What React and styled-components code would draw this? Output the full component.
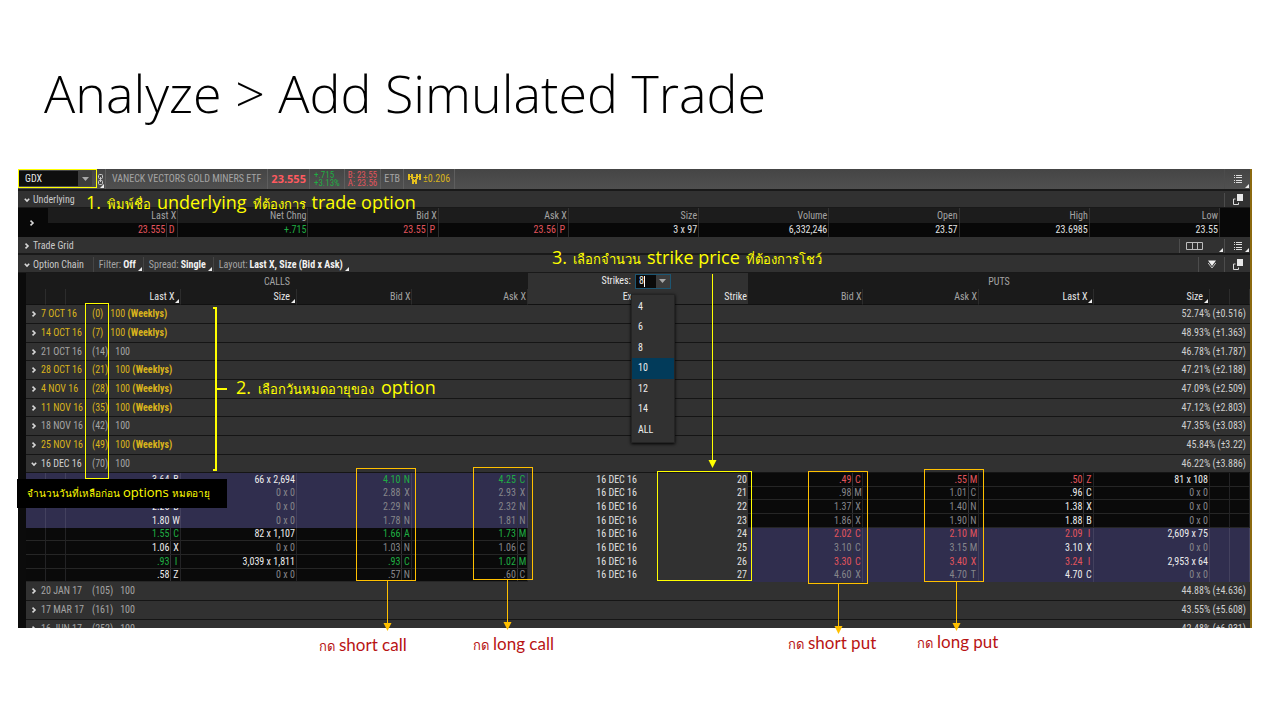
import React from "react";
import styled, { createGlobalStyle, css } from "styled-components";

const c = {
  green: "#1fae43",
  red: "#e2545c",
  gold: "#d9b31c",
  dim: "#86868a",
  text: "#e0e0e0",
  soft: "#a4a4a4",
  yellow: "#ffff00",
  orange: "#ffc000",
  crimson: "#b81414",
};

const GlobalStyle = createGlobalStyle`
  * { box-sizing: border-box; }
  body { margin: 0; background: #fff; }
  button, input { font: inherit; color: inherit; margin: 0; padding: 0; border: 0; background: none; }
  table { width: 100%; table-layout: fixed; border-collapse: separate; border-spacing: 0; }
  th, td { padding: 0; font-weight: 400; }
  ul { list-style: none; margin: 0; padding: 0; }
`;

const Slide = styled.main`
  min-height: 100vh;
  padding: 48px 28px 40px 18px;
`;

const Title = styled.h1`
  margin: 0 0 31px 26px;
  font: 300 52px/90px "Open Sans", "Liberation Sans", sans-serif;
  color: #000;
`;

const Stage = styled.div`
  position: relative;
`;

const Platform = styled.section`
  background: #0b0b0b;
  border-right: 2px solid #8c6a10;
  color: ${c.text};
  font: 10px/14px "Roboto Condensed", Roboto, "Open Sans", sans-serif;
`;

const Bar = styled.header`
  display: flex;
  align-items: stretch;
  height: ${(p) => p.$h}px;
  padding-top: ${(p) => (p.$bg ? 0 : 2)}px;
  background: ${(p) => p.$bg || "#313131"};
  border-bottom: ${(p) => (p.$edge ? 2 : 1)}px solid #191919;
`;

const Cell = styled.div`
  display: flex;
  align-items: center;
  gap: 2px;
  position: relative;
  padding: 0 ${(p) => p.$pad || 0}px;
  width: ${(p) => (p.$w ? `${p.$w}px` : "auto")};
  border-right: ${(p) => (p.$line ? "1px solid #5e5e5e" : "0")};
  color: ${(p) => p.$c || c.soft};
  white-space: nowrap;
`;

const Spacer = styled.div`
  flex: 1;
`;

const Corner = styled.i`
  position: absolute;
  right: 1px;
  bottom: 1px;
  border: solid transparent;
  border-width: 0 0 4px 4px;
  border-bottom-color: #eee;
`;

const SymbolBox = styled.div`
  display: flex;
  align-items: center;
  width: 79px;
  padding: 0 5px 1px 1px;
`;

const SymbolInput = styled.input`
  flex: 1;
  min-width: 0;
  height: 15px;
  padding-left: 6px;
  background: #0f0f0f;
  color: #e6e6e6;
`;

const DropButton = styled.button`
  display: flex;
  align-items: center;
  justify-content: center;
  width: 14px;
  height: ${(p) => p.$h || 15}px;
  background: #3c3c3c;
`;

const Price = styled.strong`
  font: 700 11px/16px "Open Sans", sans-serif;
  color: #ff5a5f;
`;

const Stack = styled.div`
  font: 9px/8px "Roboto Condensed", Roboto, sans-serif;
  color: ${(p) => p.$c};
`;

const IconButton = styled.button`
  display: flex;
  align-items: center;
  justify-content: center;
  position: relative;
  width: ${(p) => p.$w || 26}px;
  border-left: 1px solid #4c4c4c;
`;

const SectionButton = styled.button`
  display: flex;
  align-items: center;
  gap: 3px;
  padding: 0 9px 0 6px;
  color: #c9c9c9;
`;

const Setting = styled.button`
  display: flex;
  align-items: center;
  gap: 2px;
  position: relative;
  padding: 0 7px 0 5px;
  border-left: 1px solid #454545;
  color: ${c.soft};
  white-space: nowrap;
  b { color: #f2f2f2; }
`;

const QuoteHead = styled.th`
  height: 15px;
  padding: 1px 1px 0 0;
  text-align: right;
  line-height: 14px;
  color: ${c.soft};
  background: #1c1c1c;
  border-right: 1px solid #333;
`;

const QuoteCell = styled.td`
  height: 14px;
  line-height: 14px;
  padding-right: 1px;
  text-align: right;
  color: ${(p) => p.$c || c.text};
  background: #080808;
  border-right: 1px solid #2b2b2b;
`;

const QuoteEdge = styled.td`
  background: #080808;
`;

const Pair = styled.div`
  display: flex;
  justify-content: flex-end;
  gap: 1px;
`;

const Letter = styled.span`
  width: 10px;
  text-align: center;
  border-left: 1px solid #333338;
`;

const ChainWrap = styled.div`
  height: 355px;
  overflow: hidden;
  padding-left: 8px;
`;

const GroupHead = styled.th`
  height: 16px;
  padding-top: 1px;
  color: ${c.soft};
  background: #1a1a1a;
`;

const MiddleHead = styled.th`
  height: 16px;
  background: #313131;
`;

const ColumnHead = styled.th`
  position: relative;
  height: 16px;
  padding: 1px ${(p) => (p.$sort ? 6 : 1)}px 0 0;
  text-align: right;
  color: ${(p) => (p.$strong ? "#e8e8e8" : c.soft)};
  background: ${(p) => (p.$mid ? "#313131" : "#1a1a1a")};
  border-right: ${(p) => (p.$mid ? "0" : "1px solid #2c2c2c")};
  border-bottom: 1px solid #111;
`;

const StrikeControl = styled.div`
  display: flex;
  align-items: center;
  justify-content: flex-end;
  gap: 4px;
  margin-right: 77px;
  color: #ececec;
`;

const Combo = styled.div`
  position: relative;
  display: flex;
  width: 36px;
  height: 15px;
  border: 1px solid #1d5672;
  background: #0a0a0a;
  input { width: 20px; padding-left: 3px; }
`;

const Caret = styled.i`
  position: absolute;
  left: 8px;
  top: 1px;
  width: 1px;
  height: 11px;
  background: #fff;
`;

const Options = styled.ul`
  position: absolute;
  z-index: 2;
  left: -5px;
  top: 19px;
  width: 44px;
  padding: 2px 0;
  text-align: left;
  background: #313131;
  border: 1px solid #242424;
  box-shadow: 0 1px 3px #000;
`;

const Option = styled.li`
  height: 20px;
  padding-left: 6px;
  line-height: 20px;
  background: ${(p) => (p.$on ? "#023b5a" : "transparent")};
  &:nth-child(even) { height: 21px; }
`;

const ExpiryCell = styled.td`
  height: ${(p) => p.$h}px;
  background: #313131;
  border-bottom: 1px solid #151515;
`;

const ExpiryLine = styled.div`
  display: flex;
  align-items: center;
  padding: 0 4px 0 5px;
  color: ${(p) => p.$c};
  white-space: nowrap;
`;

const Toggle = styled.button`
  display: flex;
  align-items: center;
  gap: 4px;
  width: 61px;
`;

const Lot = styled.span`
  flex: 1;
  padding-left: 7px;
`;

const Bright = styled.span`
  color: #cfcfcf;
`;

const tone = { g: c.green, r: c.red, w: "#ececec", d: c.dim };

const OptCell = styled.td`
  height: ${(p) => p.$h}px;
  line-height: ${(p) => p.$h - 1}px;
  padding-right: ${(p) => (p.$pair ? 0 : 1)}px;
  vertical-align: top;
  text-align: right;
  color: ${(p) => tone[p.$t] || c.text};
  background: ${(p) => p.$bg};
  border-right: ${(p) => (p.$bg === "#0a0a0a" ? "1px solid #232325" : p.$bg === "#313131" ? "0" : "1px solid #43415e")};
  ${(p) => p.$bg === "#0a0a0a" && css`border-bottom: 1px solid #262626;`}
`;

const Outline = styled.div`
  position: absolute;
  left: ${(p) => p.$x}px;
  top: ${(p) => p.$y}px;
  width: ${(p) => p.$w}px;
  height: ${(p) => p.$h}px;
  border: 1px solid ${(p) => p.$c || c.orange};
  pointer-events: none;
`;

const Arrows = styled.svg`
  position: absolute;
  left: 0;
  top: 0;
  z-index: 3;
  pointer-events: none;
`;

const Note = styled.p`
  position: absolute;
  left: ${(p) => p.$x}px;
  top: ${(p) => p.$y}px;
  display: flex;
  align-items: baseline;
  gap: ${(p) => p.$gap || 6}px;
  margin: 0;
  white-space: nowrap;
  font: ${(p) => p.$s || 18}px/24px ${(p) => p.$f || '"Open Sans"'}, sans-serif;
  color: ${(p) => p.$c || c.yellow};
  pointer-events: none;
`;

const Thai = styled.span`
  font-size: ${(p) => p.$s || 13}px;
`;

const DaysNote = styled(Note)`
  width: 210px;
  height: 29px;
  padding: 1px 0 0 10px;
  background: #000;
`;

const Chevron = ({ open }) => (
  <svg width="6" height="6" viewBox="0 0 6 6" fill="none" stroke="#d8d8d8" strokeWidth="1.6">
    <path d={open ? "M0.8 1.8 L3 4 L5.2 1.8" : "M1.5 0.6 L4 3 L1.5 5.4"} />
  </svg>
);
const Down = () => (
  <svg width="7" height="4" viewBox="0 0 7 4"><path d="M0 0H7L3.5 4Z" fill="#a8a8a8" /></svg>
);
const ListIcon = () => (
  <svg width="10" height="10" viewBox="0 0 10 10" fill="#dcdcdc">
    <path d="M1 1h1v1H1zM3 1h6v1H3zM1 3h1v1H1zM3 3h6v1H3zM1 6h1v1H1zM3 6h6v1H3zM1 8h1v1H1zM3 8h6v1H3z" />
  </svg>
);
const PopIcon = () => (
  <svg width="12" height="12" viewBox="0 0 12 12">
    <path d="M3.5 5H1.5V10.5H6.5V8.5" fill="none" stroke="#dcdcdc" />
    <rect x="5" y="0" width="6" height="7" fill="#e8e8e8" />
  </svg>
);
const GridIcon = () => (
  <svg width="17" height="8" viewBox="0 0 17 8" fill="none" stroke="#bdbdbd">
    <path d="M0.5 0.5H16.5V7.5H0.5ZM6.5 0.5V7.5M11.5 0.5V7.5" />
  </svg>
);
const Funnel = () => (
  <svg width="10" height="9" viewBox="0 0 10 9">
    <path d="M1 0.5H9L5 6Z" fill="#f0f0f0" />
    <path d="M1.2 3L5 8L8.8 3" fill="none" stroke="#c4c4c4" />
  </svg>
);
const LinkIcon = () => (
  <svg width="7" height="13" viewBox="0 0 7 13" fill="none" stroke="#c9c9c9">
    <rect x="1.5" y="1.5" width="4" height="4" rx="1" />
    <rect x="1.5" y="7.5" width="4" height="4" rx="1" />
    <path d="M3.5 4V9" />
  </svg>
);
const VolIcon = () => (
  <svg width="13" height="10" viewBox="0 0 13 10" fill="#e5c01e">
    <path d="M0 0h2v6H0zM3 0h2v5H3zM8 0h2v5H8zM11 0h2v6h-2zM2 2h1v1H2zM10 2h1v1h-1zM4 5h2v5H4zM7 5h2v5H7zM6 6h1v2H6zM5 3h3v1H5z" />
  </svg>
);

const quotes = [
  ["Last X", "23.555", c.red, "D"],
  ["Net Chng", "+.715", c.green],
  ["Bid X", "23.55", c.red, "P"],
  ["Ask X", "23.56", c.red, "P"],
  ["Size", "3 x 97"],
  ["Volume", "6,332,246"],
  ["Open", "23.57"],
  ["High", "23.6985"],
  ["Low", "23.55"],
];

const expiries = [
  ["7 OCT 16", "(0)", true, "52.74% (±0.516)"],
  ["14 OCT 16", "(7)", true, "48.93% (±1.363)"],
  ["21 OCT 16", "(14)", false, "46.78% (±1.787)"],
  ["28 OCT 16", "(21)", true, "47.21% (±2.188)"],
  ["4 NOV 16", "(28)", true, "47.09% (±2.509)"],
  ["11 NOV 16", "(35)", true, "47.12% (±2.803)"],
  ["18 NOV 16", "(42)", false, "47.35% (±3.083)"],
  ["25 NOV 16", "(49)", true, "45.84% (±3.22)"],
  ["16 DEC 16", "(70)", false, "46.22% (±3.886)"],
];
const later = [
  ["20 JAN 17", "(105)", false, "44.88% (±4.636)"],
  ["17 MAR 17", "(161)", false, "43.55% (±5.608)"],
  ["16 JUN 17", "(252)", false, "42.48% (±6.931)"],
];

const strikes = [
  ["3.64 B w", "66 x 2,694", "4.10 N g", "4.25 C g", 20, ".49 C r", ".55 M r", ".50 Z r", "81 x 108"],
  ["2.88 C w", "0 x 0", "2.88 X d", "2.93 X d", 21, ".98 M d", "1.01 C d", ".96 C w", "0 x 0"],
  ["2.26 B w", "0 x 0", "2.29 N d", "2.32 N d", 22, "1.37 X d", "1.40 N d", "1.38 X w", "0 x 0"],
  ["1.80 W w", "0 x 0", "1.78 N d", "1.81 N d", 23, "1.86 X d", "1.90 N d", "1.88 B w", "0 x 0"],
  ["1.55 C g", "82 x 1,107", "1.66 A g", "1.73 M g", 24, "2.02 C r", "2.10 M r", "2.09 I r", "2,609 x 75"],
  ["1.06 X w", "0 x 0", "1.03 N d", "1.06 C d", 25, "3.10 C d", "3.15 M d", "3.10 X w", "0 x 0"],
  [".93 I g", "3,039 x 1,811", ".93 C g", "1.02 M g", 26, "3.30 C r", "3.40 X r", "3.24 I r", "2,953 x 64"],
  [".58 Z w", "0 x 0", ".57 N d", ".60 C d", 27, "4.60 X d", "4.70 T d", "4.70 C w", "0 x 0"],
];

function PriceCell({ v, h, bg }) {
  const [price, letter, t] = v.split(" ");
  return (
    <OptCell $h={h} $bg={bg} $t={t} $pair>
      <Pair>
        <span>{price}</span>
        <Letter>{letter}</Letter>
      </Pair>
    </OptCell>
  );
}

function SizeCell({ v, h, bg }) {
  return <OptCell $h={h} $bg={bg} $t={v === "0 x 0" ? "d" : "w"}>{v}</OptCell>;
}

function StrikeRow({ row, i }) {
  const [cl, cs, cb, ca, k, pb, pa, pl, ps] = row;
  const h = i % 3 === 1 ? 13 : 14;
  const call = i < 4 ? "#302e4e" : "#0a0a0a";
  const put = i < 4 ? "#0a0a0a" : "#302e4e";
  return (
    <tr>
      <OptCell $h={h} $bg={call} />
      <OptCell $h={h} $bg={call} />
      <PriceCell v={cl} h={h} bg={call} />
      <SizeCell v={cs} h={h} bg={call} />
      <PriceCell v={cb} h={h} bg={call} />
      <PriceCell v={ca} h={h} bg={call} />
      <OptCell $h={h} $bg="#313131">16 DEC 16</OptCell>
      <OptCell $h={h} $bg="#313131">{k}</OptCell>
      <PriceCell v={pb} h={h} bg={put} />
      <PriceCell v={pa} h={h} bg={put} />
      <PriceCell v={pl} h={h} bg={put} />
      <SizeCell v={ps} h={h} bg={put} />
      <OptCell $h={h} $bg={put} />
      <OptCell $h={h} $bg={put} />
    </tr>
  );
}

function ExpiryRow({ row, i, open }) {
  const [date, days, weekly, vol] = row;
  return (
    <tr>
      <ExpiryCell colSpan={14} $h={i % 3 === 2 ? 18 : 19}>
        <ExpiryLine $c={weekly ? c.gold : c.soft}>
          <Toggle aria-expanded={!!open}>
            <Chevron open={open} />
            {open ? <Bright>{date}</Bright> : <span>{date}</span>}
          </Toggle>
          <span>{days}</span>
          <Lot>100 {weekly && <b>(Weeklys)</b>}</Lot>
          <Bright>{vol}</Bright>
        </ExpiryLine>
      </ExpiryCell>
    </tr>
  );
}

function ArrowDown({ x, y1, y2, color }) {
  return (
    <g fill={color} stroke="none">
      <rect x={x} y={y1} width="1" height={y2 - y1 - 6} />
      <path d={`M${x - 3.5} ${y2 - 8}H${x + 4.5}L${x + 0.5} ${y2}Z`} />
    </g>
  );
}

export default function App() {
  return (
    <Slide>
      <GlobalStyle />
      <Title>Analyze &gt; Add Simulated Trade</Title>
      <Stage>
        <Platform>
          <Bar $h={22} $bg="linear-gradient(#454545,#505050)" $edge>
            <SymbolBox>
              <SymbolInput aria-label="Symbol" defaultValue="GDX" />
              <DropButton aria-label="Choose symbol"><Down /></DropButton>
            </SymbolBox>
            <Cell $w={9} $line><LinkIcon /><Corner /></Cell>
            <Cell $pad={6} $line>VANECK VECTORS GOLD MINERS ETF</Cell>
            <Cell $pad={3} $line><Price>23.555</Price></Cell>
            <Cell $pad={4} $line><Stack $c={c.green}>+.715<br />+3.13%</Stack></Cell>
            <Cell $pad={3} $line><Stack $c={c.red}>B: 23.55<br />A: 23.56</Stack></Cell>
            <Cell $pad={3} $line>ETB</Cell>
            <Cell $pad={4} $line $c={c.gold}><VolIcon />±0.206</Cell>
            <Spacer />
            <IconButton aria-label="Menu"><ListIcon /><Corner /></IconButton>
          </Bar>
          <Bar $h={17}>
            <SectionButton><Chevron open />Underlying</SectionButton>
            <Spacer />
            <IconButton aria-label="Detach"><PopIcon /></IconButton>
          </Bar>
          <table>
            <colgroup>
              <col style={{ width: 30 }} />
              {quotes.map((q) => <col key={q[0]} />)}
              <col style={{ width: 30 }} />
            </colgroup>
            <tbody>
              <tr>
                <QuoteEdge rowSpan={2}>
                  <SectionButton aria-label="Expand quote"><Cell $pad={5}><Chevron /></Cell></SectionButton>
                </QuoteEdge>
                {quotes.map((q) => <QuoteHead key={q[0]} scope="col">{q[0]}</QuoteHead>)}
                <QuoteEdge rowSpan={2} />
              </tr>
              <tr>
                {quotes.map(([name, v, color, l]) => (
                  <QuoteCell key={name} $c={color}>
                    {l ? <Pair><span>{v}</span><Letter>{l}</Letter></Pair> : v}
                  </QuoteCell>
                ))}
              </tr>
            </tbody>
          </table>
          <Bar $h={18} $edge>
            <SectionButton><Chevron />Trade Grid</SectionButton>
            <Spacer />
            <IconButton $w={45} aria-label="Grid layout"><Cell $pad={6}><GridIcon /></Cell><Spacer /><Corner /></IconButton>
            <IconButton aria-label="Menu"><ListIcon /><Corner /></IconButton>
          </Bar>
          <Bar $h={18}>
            <SectionButton><Chevron open />Option Chain</SectionButton>
            <Setting>Filter: <b>Off</b><Corner /></Setting>
            <Setting>Spread: <b>Single</b><Corner /></Setting>
            <Setting>Layout: <b>Last X, Size (Bid x Ask)</b><Corner /></Setting>
            <Spacer />
            <IconButton aria-label="Filter"><Funnel /></IconButton>
            <IconButton aria-label="Detach"><PopIcon /></IconButton>
          </Bar>
          <ChainWrap>
            <table>
              <colgroup>
                <col style={{ width: 20 }} />
                <col style={{ width: 20 }} />
                <col /><col /><col /><col />
                <col style={{ width: 110 }} />
                <col style={{ width: 110 }} />
                <col /><col /><col /><col />
                <col style={{ width: 20 }} />
                <col style={{ width: 20 }} />
              </colgroup>
              <thead>
                <tr>
                  <GroupHead colSpan={6}>CALLS</GroupHead>
                  <MiddleHead colSpan={2}>
                    <StrikeControl>
                      <label htmlFor="strikes">Strikes:</label>
                      <Combo>
                        <input id="strikes" role="combobox" aria-expanded="true" aria-controls="strike-options" defaultValue="8" />
                        <Caret />
                        <DropButton $h={13} aria-label="Show strike counts"><Down /></DropButton>
                        <Options id="strike-options" role="listbox">
                          {["4", "6", "8", "10", "12", "14", "ALL"].map((o) => (
                            <Option key={o} role="option" aria-selected={o === "10"} $on={o === "10"}>{o}</Option>
                          ))}
                        </Options>
                      </Combo>
                    </StrikeControl>
                  </MiddleHead>
                  <GroupHead colSpan={6}>PUTS</GroupHead>
                </tr>
                <tr>
                  <ColumnHead />
                  <ColumnHead />
                  <ColumnHead $strong $sort>Last X<Corner /></ColumnHead>
                  <ColumnHead $strong $sort>Size<Corner /></ColumnHead>
                  <ColumnHead>Bid X</ColumnHead>
                  <ColumnHead>Ask X</ColumnHead>
                  <ColumnHead $mid $strong>Exp</ColumnHead>
                  <ColumnHead $mid $strong>Strike</ColumnHead>
                  <ColumnHead>Bid X</ColumnHead>
                  <ColumnHead>Ask X</ColumnHead>
                  <ColumnHead $strong $sort>Last X<Corner /></ColumnHead>
                  <ColumnHead $strong $sort>Size<Corner /></ColumnHead>
                  <ColumnHead />
                  <ColumnHead />
                </tr>
              </thead>
              <tbody>
                {expiries.map((r, i) => <ExpiryRow key={r[0]} row={r} i={i} open={i === 8} />)}
                {strikes.map((r, i) => <StrikeRow key={r[4]} row={r} i={i} />)}
                {later.map((r, i) => <ExpiryRow key={r[0]} row={r} i={i} />)}
              </tbody>
            </table>
          </ChainWrap>
        </Platform>

        <Outline $x={0} $y={0} $w={79} $h={19} $c={c.yellow} />
        <Outline $x={67} $y={134} $w={24} $h={176} $c={c.yellow} />
        <Outline $x={639} $y={302} $w={95} $h={110} $c={c.yellow} />
        <Outline $x={338} $y={299} $w={60} $h={113} />
        <Outline $x={455} $y={298} $w={60} $h={113} />
        <Outline $x={790} $y={302} $w={60} $h={113} />
        <Outline $x={906} $y={300} $w={60} $h={113} />

        <Note $x={68} $y={21}>
          <span>1.</span><Thai>พิมพ์ชื่อ</Thai><span>underlying</span><Thai>ที่ต้องการ</Thai><span>trade option</span>
        </Note>
        <Note $x={218} $y={206} $gap={7}>
          <span>2.</span><Thai>เลือกวันหมดอายุของ</Thai><span>option</span>
        </Note>
        <Note $x={534} $y={76}>
          <span>3.</span><Thai>เลือกจำนวน</Thai><span>strike price</span><Thai>ที่ต้องการโชว์</Thai>
        </Note>
        <DaysNote $x={-1} $y={310} $s={13} $gap={3}>
          <Thai $s={10}>จำนวนวันที่เหลือก่อน</Thai><span>options</span><Thai $s={10}>หมดอายุ</Thai>
        </DaysNote>
        <Note $x={301} $y={464} $s={17} $gap={4} $f="Lato" $c={c.crimson}><Thai>กด</Thai>short call</Note>
        <Note $x={455} $y={463} $s={17} $gap={4} $f="Lato" $c={c.crimson}><Thai>กด</Thai>long call</Note>
        <Note $x={770} $y={462} $s={17} $gap={4} $f="Lato" $c={c.crimson}><Thai>กด</Thai>short put</Note>
        <Note $x={899} $y={461} $s={17} $gap={4} $f="Lato" $c={c.crimson}><Thai>กด</Thai>long put</Note>

        <Arrows width="1000" height="470" viewBox="0 0 1000 470" aria-hidden="true">
          <ArrowDown x={694} y1={105} y2={299} color={c.yellow} />
          <ArrowDown x={369} y1={411} y2={462} color={c.orange} />
          <ArrowDown x={489} y1={410} y2={461} color={c.orange} />
          <ArrowDown x={820} y1={415} y2={465} color={c.orange} />
          <ArrowDown x={938} y1={412} y2={462} color={c.orange} />
          <path d="M195 139H198V301H195M198 220H209" fill="none" stroke={c.yellow} strokeWidth="2" />
        </Arrows>
      </Stage>
    </Slide>
  );
}
